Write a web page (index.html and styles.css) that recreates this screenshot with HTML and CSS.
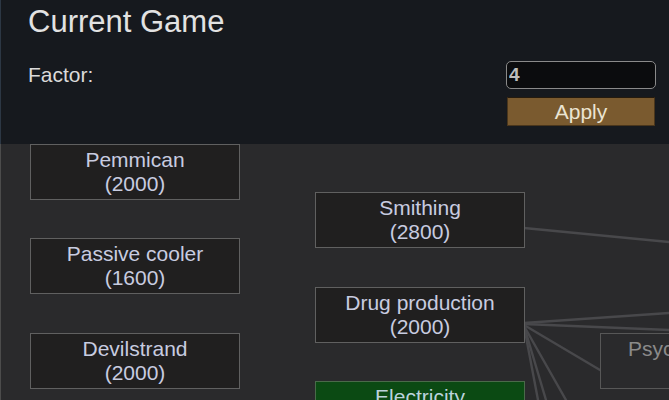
FILE: index.html
```html
<!DOCTYPE html>
<html lang="en">
<head>
<meta charset="utf-8">
<title>Current Game</title>
<link rel="stylesheet" href="styles.css">
</head>
<body>
<div class="page">
  <header class="header">
    <h1 class="title">Current Game</h1>
    <div class="factor-row">
      <label class="factor-label" for="factor">Factor:</label>
      <div class="factor-controls">
        <input class="factor-input" id="factor" type="text" value="4">
        <button class="apply-btn" type="button">Apply</button>
      </div>
    </div>
  </header>
  <section class="tree">
    <svg class="links" viewBox="0 144 669 256" width="669" height="256" aria-hidden="true">
      <g stroke="#48484b" stroke-width="2.4" fill="none" stroke-linecap="round">
        <line x1="524" y1="228" x2="669" y2="242"/>
        <line x1="524" y1="323" x2="669" y2="313"/>
        <line x1="524" y1="324" x2="669" y2="330"/>
        <line x1="524" y1="325" x2="600" y2="370"/>
        <line x1="524" y1="326" x2="538" y2="400"/>
        <line x1="524" y1="326" x2="546" y2="400"/>
        <line x1="524" y1="326" x2="566" y2="400"/>
      </g>
    </svg>
    <div class="node" style="left:29px;top:0px"><span>Pemmican</span><span>(2000)</span></div>
    <div class="node" style="left:29px;top:94px"><span>Passive cooler</span><span>(1600)</span></div>
    <div class="node" style="left:29px;top:189px"><span>Devilstrand</span><span>(2000)</span></div>
    <div class="node" style="left:314px;top:48px"><span>Smithing</span><span>(2800)</span></div>
    <div class="node" style="left:314px;top:143px"><span>Drug production</span><span>(2000)</span></div>
    <div class="node node--done" style="left:314px;top:237px"><span>Electricity</span><span>(1600)</span></div>
    <div class="node node--locked" style="left:599px;top:189px"><span>Psychite refining</span><span>(1500)</span></div>
  </section>
</div>
</body>
</html>
```
FILE: styles.css
```css
* { box-sizing: border-box; }
html, body {
  margin: 0;
  padding: 0;
  width: 669px;
  height: 400px;
  overflow: hidden;
  background: #2a2a2c;
  font-family: "Liberation Sans", Arial, sans-serif;
}
.page {
  width: 669px;
  height: 400px;
  display: flex;
  flex-direction: column;
}
.header {
  height: 144px;
  flex: 0 0 144px;
  background: #16191e;
  border-left: 1px solid #2c3744;
  padding: 4px 13px 0 27px;
}
.title {
  margin: 0;
  font-size: 31px;
  line-height: 36px;
  font-weight: normal;
  color: #e2e2e2;
}
.factor-row {
  margin-top: 21px;
  display: flex;
  justify-content: space-between;
  align-items: flex-start;
}
.factor-label {
  padding-top: 2px;
  font-size: 21px;
  line-height: 24px;
  color: #dadada;
}
.factor-controls {
  width: 150px;
  display: flex;
  flex-direction: column;
  gap: 8px;
}
.factor-input {
  width: 150px;
  height: 28px;
  margin: 0;
  border: 1px solid #8a8a8a;
  border-radius: 5px;
  background: #0b0c0e;
  color: #bdbdbd;
  font-family: "Liberation Sans", Arial, sans-serif;
  font-weight: bold;
  font-size: 19px;
  padding: 0 2px;
  outline: none;
}
.apply-btn {
  width: 148px;
  height: 29px;
  margin: 0 0 0 1px;
  padding: 0;
  background: #7a5a2f;
  border: 1px solid #4a361c;
  border-top-color: #241a0e;
  color: #ebe4d2;
  font-family: "Liberation Sans", Arial, sans-serif;
  font-size: 21px;
  line-height: 27px;
  text-align: center;
}
.tree {
  position: relative;
  flex: 1 1 auto;
  background: #2a2a2c;
  border-left: 1px solid #4c4c4c;
  overflow: hidden;
}
.links {
  position: absolute;
  left: -1px;
  top: 0;
}
.node {
  position: absolute;
  width: 210px;
  height: 56px;
  background: #201f1f;
  border: 1px solid #606060;
  display: flex;
  flex-direction: column;
  align-items: center;
  justify-content: center;
  color: #c8cce0;
  font-size: 21px;
  line-height: 24px;
  white-space: nowrap;
}
.node--done {
  background: #0b4a13;
  border-color: #4a6a4a;
  color: #bcd3dc;
}
.node--locked {
  background: #2a2a2c;
  border-color: #575757;
  color: #8a8a8a;
}
```
